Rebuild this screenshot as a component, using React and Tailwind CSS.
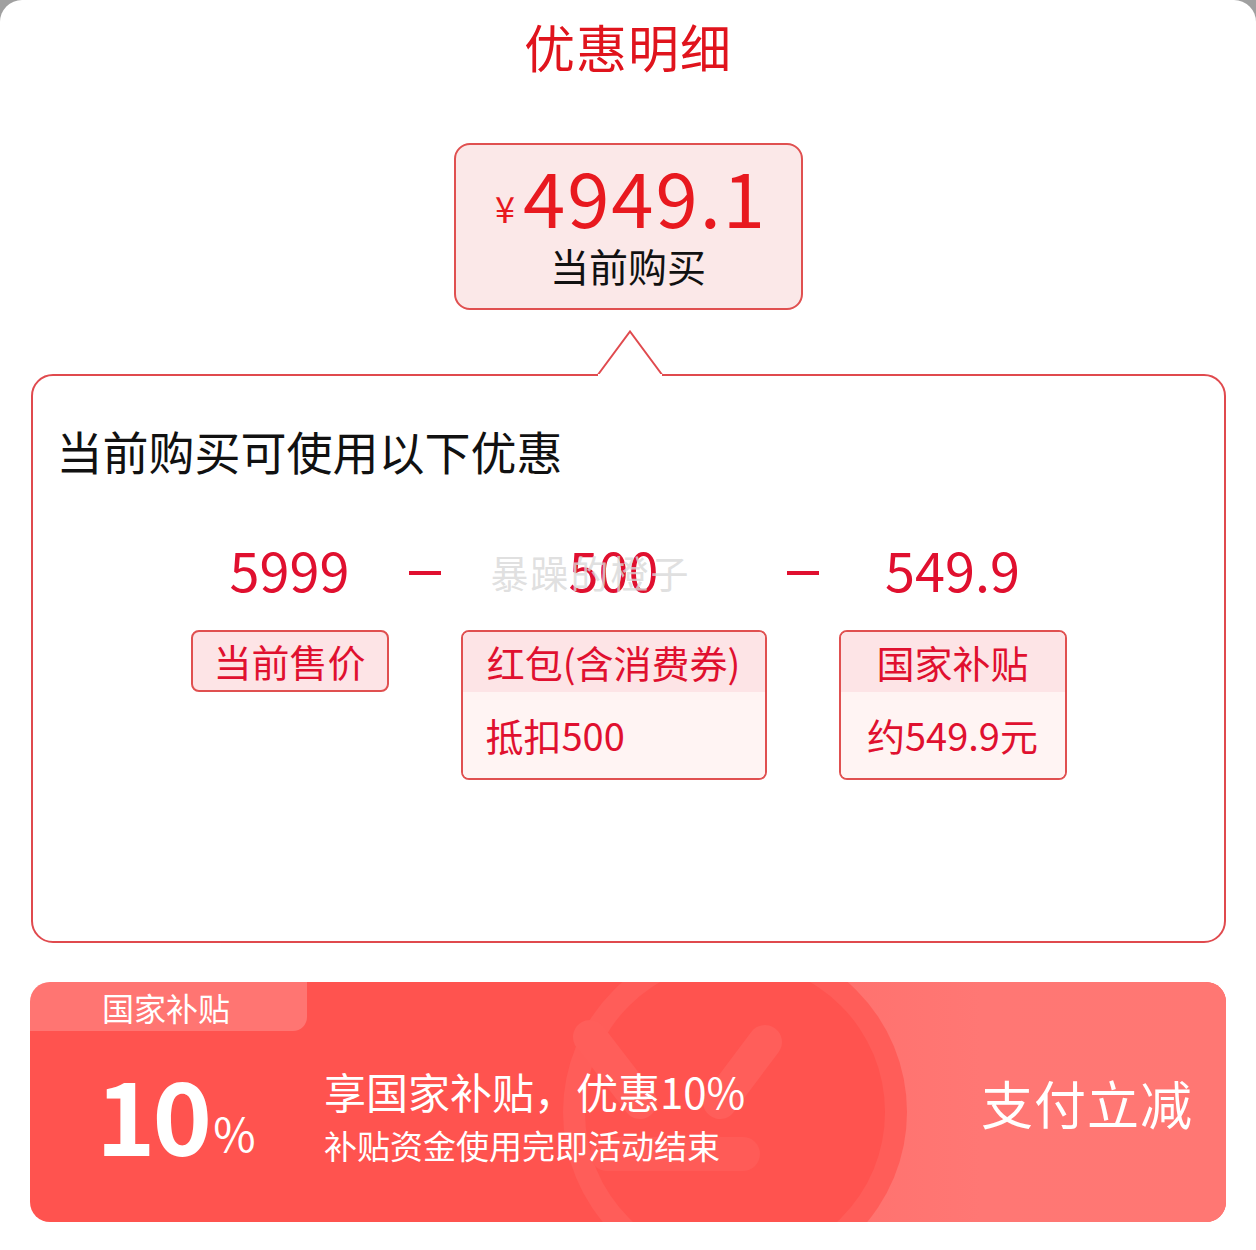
export default function App() {
  const font = { fontFamily: '"Noto Sans CJK SC", "Noto Sans", sans-serif' };
  return (
    <div className="w-[1256px] h-[1250px] bg-[#a0a0a0]" style={font}>
      <div className="w-full h-full bg-white rounded-t-[22px] flex flex-col items-center">
        <div className="mt-[14px] text-[51px] leading-[64px] text-[#e0141d] tracking-[1px]">优惠明细</div>

        {/* price box */}
        <div className="mt-[65px] w-[349px] h-[167px] rounded-[16px] border-2 border-[#e05050] bg-[#fbe8e8] flex flex-col items-center">
          <div className="flex items-end mt-[14px] h-[72px] ml-[6px]">
            <span className="text-[36px] leading-[40px] text-[#e8191f] mb-[4px] mr-[8px]">¥</span>
            <span className="text-[76px] leading-[72px] text-[#e8191f] tracking-[2px]">4949.1</span>
          </div>
          <div className="text-[39px] leading-[44px] text-[#111] mt-[12px]">当前购买</div>
        </div>

        {/* callout */}
        <div className="relative mt-[64px] w-[1195px] h-[569px] rounded-[22px] border-2 border-[#e04a4e] bg-white">
          <svg className="absolute left-[563px] top-[-46px]" width="68" height="48" viewBox="0 0 68 48">
            <polygon points="0,46 34,1 68,46" fill="white" />
            <polyline points="1,46 34,1.5 67,46" fill="none" stroke="#e04a4e" strokeWidth="2" />
            <rect x="0" y="44" width="68" height="6" fill="white" />
            <line x1="0" y1="45" x2="2" y2="45" stroke="#e04a4e" strokeWidth="2" />
            <line x1="66" y1="45" x2="68" y2="45" stroke="#e04a4e" strokeWidth="2" />
          </svg>
          <div className="pl-[24px] pt-[44px] text-[46px] leading-[60px] text-[#111]">当前购买可使用以下优惠</div>

          <div className="relative ml-[158px] mt-[56px] flex">
            {/* col 1 */}
            <div className="w-[198px] flex flex-col items-center">
              <div className="text-[54px] leading-[66px] text-[#e0102f]">5999</div>
              <div className="mt-[28px] w-[198px] h-[62px] rounded-[8px] border-2 border-[#e05050] bg-[#fde4e6] flex items-center justify-center text-[38px] leading-[48px] text-[#e0102f]">当前售价</div>
            </div>
            <div className="w-[72px] h-[66px] flex items-center justify-center">
              <div className="w-[32px] h-[4px] bg-[#e0102f] mt-[8px]"></div>
            </div>
            {/* col 2 */}
            <div className="w-[306px] flex flex-col items-center">
              <div className="text-[54px] leading-[66px] text-[#e0102f]">500</div>
              <div className="mt-[28px] w-[306px] h-[150px] rounded-[8px] border-2 border-[#e05050] overflow-hidden flex flex-col">
                <div className="h-[60px] bg-[#fde4e6] flex items-center justify-center text-[38px] leading-[48px] text-[#e0102f]">红包(含消费券)</div>
                <div className="flex-1 bg-[#fff4f3] flex items-center pl-[23px] text-[38px] leading-[48px] text-[#e0102f]">抵扣500</div>
              </div>
            </div>
            <div className="w-[72px] h-[66px] flex items-center justify-center">
              <div className="w-[32px] h-[4px] bg-[#e0102f] mt-[8px]"></div>
            </div>
            {/* col 3 */}
            <div className="w-[228px] flex flex-col items-center">
              <div className="text-[54px] leading-[66px] text-[#e0102f]">549.9</div>
              <div className="mt-[28px] w-[228px] h-[150px] rounded-[8px] border-2 border-[#e05050] overflow-hidden flex flex-col">
                <div className="h-[60px] bg-[#fde4e6] flex items-center justify-center text-[38px] leading-[48px] text-[#e0102f]">国家补贴</div>
                <div className="flex-1 bg-[#fff4f3] flex items-center justify-center text-[38px] leading-[48px] text-[#e0102f]">约549.9元</div>
              </div>
            </div>
            <div className="absolute left-[300px] top-[6px] text-[38px] leading-[60px] text-[#d8d8d8]/80 tracking-[2px]">暴躁的橙子</div>
          </div>
        </div>

        {/* banner */}
        <div className="relative mt-[39px] w-[1196px] h-[240px] rounded-[20px] overflow-hidden bg-[#ff534f] flex">
          <svg className="absolute left-0 top-0" width="1196" height="240" viewBox="0 0 1196 240">
            <defs>
              <linearGradient id="rg" x1="0" y1="0" x2="1" y2="0">
                <stop offset="0" stopColor="#ff6e6a" />
                <stop offset="0.5" stopColor="#ff7774" />
                <stop offset="1" stopColor="#ff7773" />
              </linearGradient>
            </defs>
            <rect x="705" y="0" width="491" height="240" fill="url(#rg)" />
            <circle cx="705" cy="130" r="172" fill="#ff5d59" />
            <circle cx="705" cy="130" r="150" fill="#ff534f" />
            <path d="M560 55 L610 120" stroke="#ff5e5a" strokeWidth="34" strokeLinecap="round" />
            <path d="M735 60 L690 120" stroke="#ff5e5a" strokeWidth="34" strokeLinecap="round" />
            <rect x="560" y="155" width="170" height="34" rx="17" fill="#ff5b57" />
          </svg>
          <div className="absolute left-0 top-0 w-[277px] h-[49px] bg-white/20 rounded-br-[14px] flex items-center pl-[72px] text-[32px] leading-[40px] text-white">国家补贴</div>
          <div className="relative flex-1 flex items-center">
            <div className="ml-[66px] mt-[20px] flex items-end w-[228px]">
              <span className="text-[101px] leading-[100px] font-bold text-white tracking-[-3px]">10</span>
              <span className="text-[46px] leading-[56px] text-white ml-[4px] mb-[2px]">%</span>
            </div>
            <div className="mt-[28px] flex flex-col">
              <div className="text-[42px] leading-[52px] text-white">享国家补贴，优惠10%</div>
              <div className="mt-[6px] text-[33px] leading-[44px] text-white">补贴资金使用完即活动结束</div>
            </div>
          </div>
          <div className="relative w-[290px] flex items-center pl-[45px] pt-[2px]">
            <span className="text-[52px] leading-[64px] text-white tracking-[1px]">支付立减</span>
          </div>
        </div>
      </div>
    </div>
  );
}
